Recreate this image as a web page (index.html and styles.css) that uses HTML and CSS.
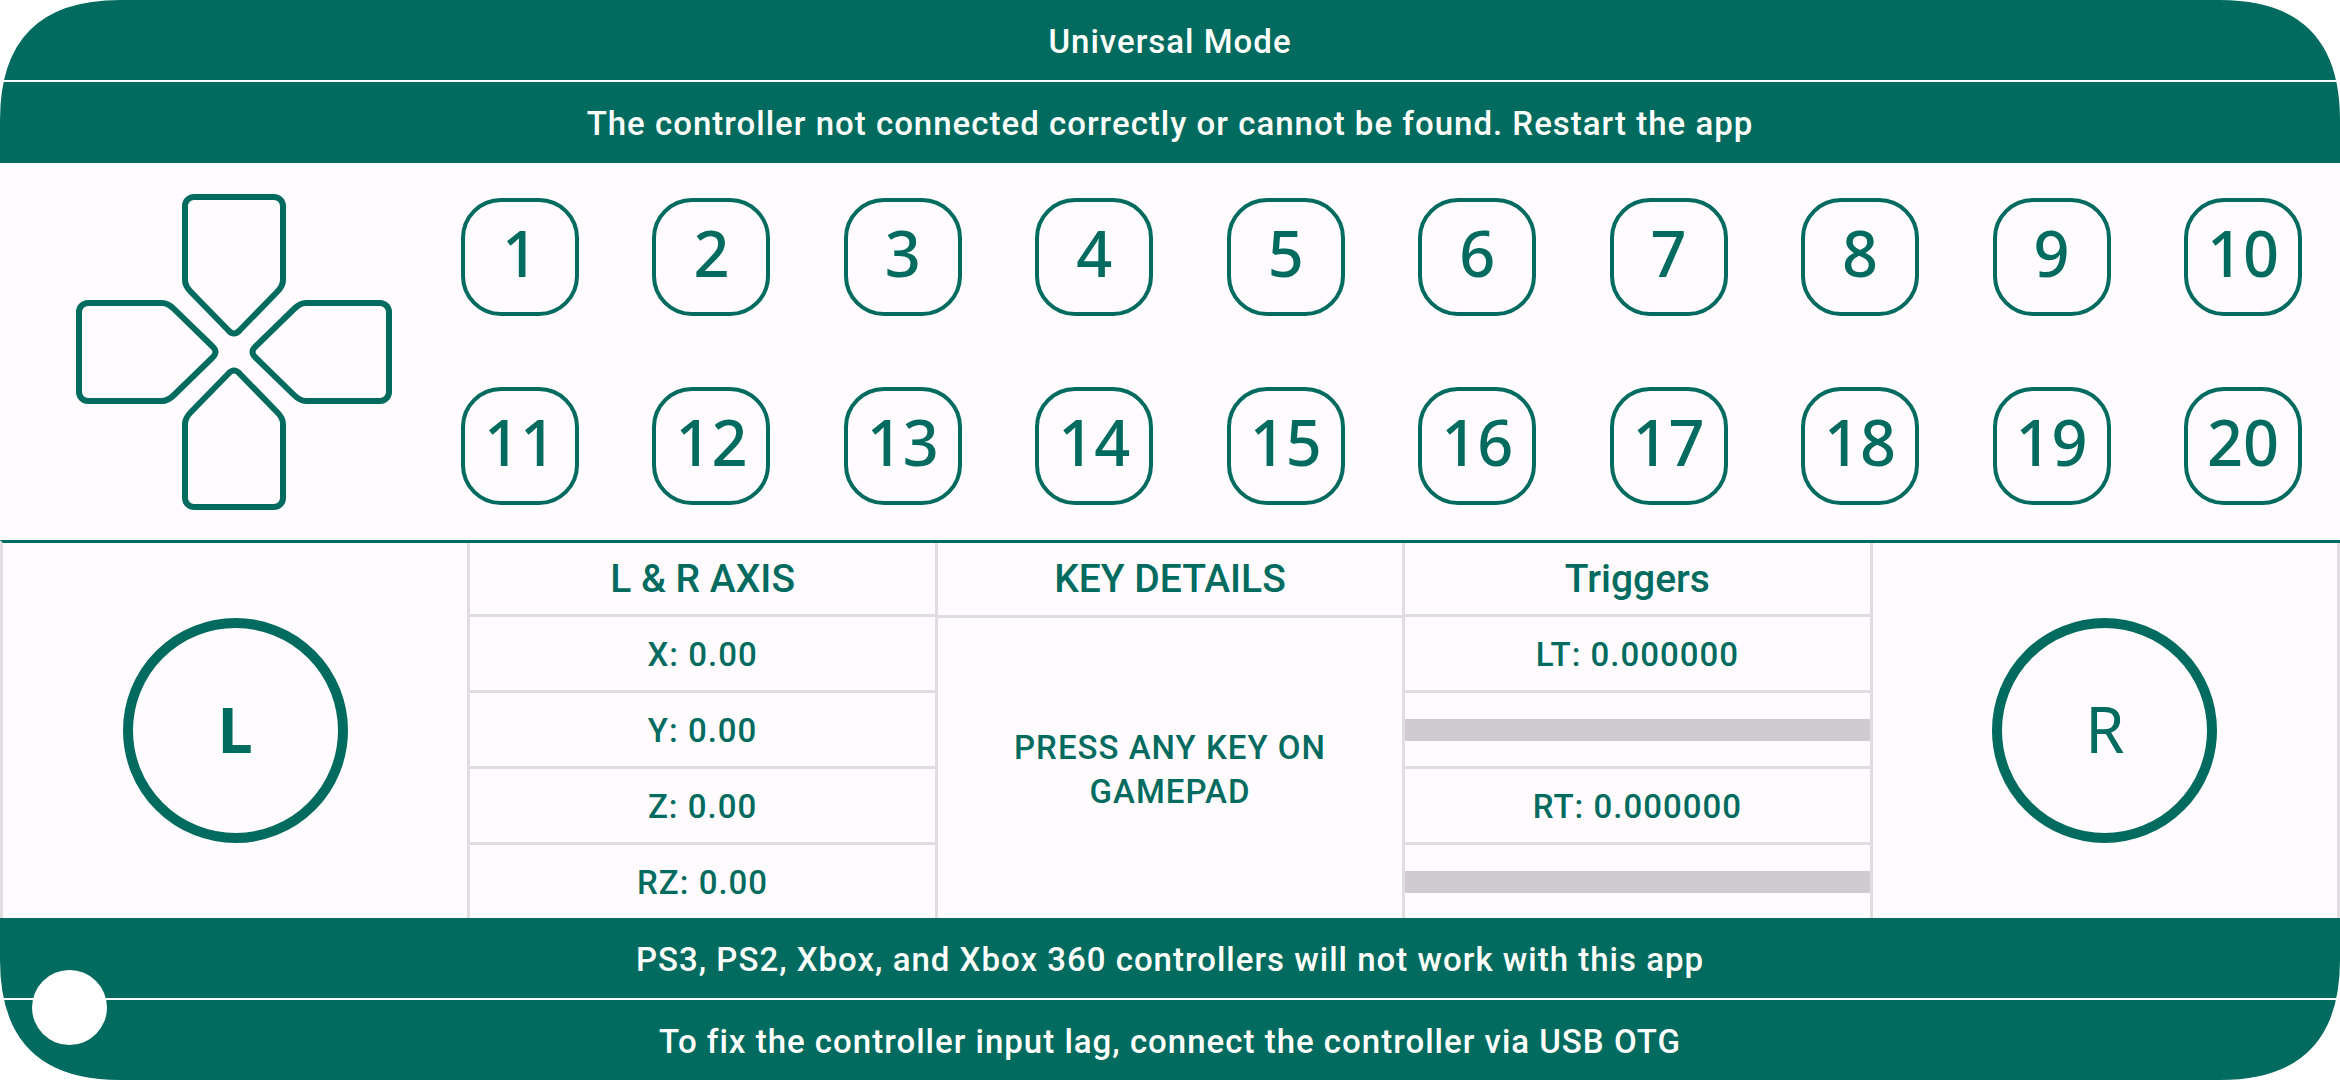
FILE: index.html
```html
<!DOCTYPE html>
<html lang="en">
<head>
    <meta charset="UTF-8">
    <meta name="viewport" content="width=device-width, initial-scale=1.0">
    <title>Gamepad Tester</title>

    <link rel="stylesheet" href="styles.css">
</head>

<body>
    <div class="container">
        <header class="bars">
            <p>Universal Mode</p>
            <p>The controller not connected correctly or cannot be found. Restart the app</p>
        </header>

        <section class="pad">
            <svg class="dpad" viewBox="0 0 316 316">
                <defs>
                    <path id="arrow" d="M109 86V12A9 9 0 0 1 118 3H198A9 9 0 0 1 207 12V86Q207 92 201 98L164 136Q158 143 152 136L115 98Q109 92 109 86Z"/>
                </defs>
                <use href="#arrow"/>
                <use href="#arrow" transform="rotate(90 158 158)"/>
                <use href="#arrow" transform="rotate(180 158 158)"/>
                <use href="#arrow" transform="rotate(270 158 158)"/>
            </svg>

            <div class="keys">
                <div class="keys_row">
                    <button>1</button>
                    <button>2</button>
                    <button>3</button>
                    <button>4</button>
                    <button>5</button>
                    <button>6</button>
                    <button>7</button>
                    <button>8</button>
                    <button>9</button>
                    <button>10</button>
                </div>
                <div class="keys_row">
                    <button>11</button>
                    <button>12</button>
                    <button>13</button>
                    <button>14</button>
                    <button>15</button>
                    <button>16</button>
                    <button>17</button>
                    <button>18</button>
                    <button>19</button>
                    <button>20</button>
                </div>
            </div>
        </section>

        <section class="details">
            <div class="column stick">
                <button class="left">L</button>
            </div>

            <div class="column">
                <table>
                    <tr><th>L &amp; R AXIS</th></tr>
                    <tr><td>X: 0.00</td></tr>
                    <tr><td>Y: 0.00</td></tr>
                    <tr><td>Z: 0.00</td></tr>
                    <tr><td>RZ: 0.00</td></tr>
                </table>
            </div>

            <div class="column key_details">
                <h2>KEY DETAILS</h2>
                <p>PRESS ANY KEY ON GAMEPAD</p>
            </div>

            <div class="column">
                <table>
                    <tr><th>Triggers</th></tr>
                    <tr><td><label for="lt">LT: 0.000000</label></td></tr>
                    <tr><td class="bar"><progress id="lt" value="0" max="1"></progress></td></tr>
                    <tr><td><label for="rt">RT: 0.000000</label></td></tr>
                    <tr><td class="bar"><progress id="rt" value="0" max="1"></progress></td></tr>
                </table>
            </div>

            <div class="column stick">
                <button>R</button>
            </div>
        </section>

        <footer class="bars">
            <p>PS3, PS2, Xbox, and Xbox 360 controllers will not work with this app</p>
            <p>To fix the controller input lag, connect the controller via USB OTG</p>
        </footer>

        <button class="menu" aria-label="Menu"></button>

        <!-- rounded screen corners -->
        <svg class="corner top_left" viewBox="0 0 120 120"><path d="M0 0H120Q0 0 0 120Z"/></svg>
        <svg class="corner top_right" viewBox="0 0 120 120"><path d="M120 0V120Q120 0 0 0Z"/></svg>
        <svg class="corner bottom_left" viewBox="0 0 120 120"><path d="M0 120V0Q0 120 120 120Z"/></svg>
        <svg class="corner bottom_right" viewBox="0 0 120 120"><path d="M120 120H0Q120 120 120 0Z"/></svg>
    </div>
</body>
</html>
```
FILE: styles.css
```css
*{
    margin: 0;
    padding: 0;
    box-sizing: border-box;
}
body{
    background-color: #fffbff;
    color: #006b5e;
    font-family: Roboto, sans-serif;
    font-size: 33px;
    font-weight: 500;
    letter-spacing: 1px;
}
button{
    background: none;
    color: #006b5e;
    font-family: "Noto Sans", "Open Sans", sans-serif;
    font-size: 63px;
    line-height: 80px;
}
.container{
    position: relative;
    min-height: 100vh;
    display: flex;
    flex-direction: column;
}

.bars{
    background-color: #006b5e;
    color: #ffffff;
    text-align: center;
}
.bars p{
    padding: 22px 20px 18px;
    line-height: 40px;
}
.bars p + p{
    border-top: 2px solid #ffffff;
}
header.bars{
    padding-bottom: 1px;
}

.pad{
    flex: 1;
    display: flex;
    align-items: center;
    gap: 69px;
    padding: 0 38px 0 76px;
}
.dpad{
    width: 316px;
    height: 316px;
    flex-shrink: 0;
    fill: none;
    stroke: #006b5e;
    stroke-width: 6px;
}
.keys{
    flex: 1;
    display: flex;
    flex-direction: column;
    gap: 71px;
}
.keys_row{
    display: flex;
    justify-content: space-between;
}
.keys_row button{
    width: 118px;
    height: 118px;
    padding-bottom: 8px;
    border: 4px solid #006b5e;
    border-radius: 40px;
    font-weight: 500;
}

.details{
    display: grid;
    grid-template-columns: repeat(5, 1fr);
    border-top: 3px solid #006b5e;
    border-left: 3px solid #e0dce0;
    text-align: center;
}
.column{
    border-right: 3px solid #e0dce0;
}
.stick{
    display: flex;
    align-items: center;
    justify-content: center;
}
.stick button{
    width: 225px;
    height: 225px;
    padding-bottom: 4px;
    border: 10px solid #006b5e;
    border-radius: 50%;
}
.stick .left{
    font-weight: 700;
}

table{
    width: 100%;
    border-spacing: 0;
}
th, td{
    height: 76px;
    border-bottom: 3px solid #e0dce0;
    vertical-align: middle;
}
td{
    padding-top: 2px;
}
.bar{
    padding-top: 0;
}
th, h2{
    height: 74px;
    font-size: 39px;
    font-weight: 500;
    letter-spacing: 0;
}
tr:last-child td{
    height: 73px;
    border-bottom: none;
}
progress{
    display: block;
    width: 100%;
    height: 22px;
    appearance: none;
    border: none;
    background-color: #d0cbd0;
}
progress::-webkit-progress-bar{
    background-color: #d0cbd0;
}
progress::-webkit-progress-value{
    background-color: #006b5e;
}

.key_details{
    display: flex;
    flex-direction: column;
}
.key_details h2{
    height: 75px;
    line-height: 72px;
    border-bottom: 3px solid #e0dce0;
}
.key_details p{
    flex: 1;
    display: flex;
    align-items: center;
    padding: 4px 70px 0;
    line-height: 44px;
}

.menu{
    position: absolute;
    left: 32px;
    bottom: 35px;
    width: 75px;
    height: 75px;
    border: none;
    border-radius: 50%;
    background-color: #ffffff;
}
.corner{
    position: absolute;
    width: 120px;
    height: 120px;
    fill: #ffffff;
    pointer-events: none;
}
.top_left{
    top: 0;
    left: 0;
}
.top_right{
    top: 0;
    right: 0;
}
.bottom_left{
    bottom: 0;
    left: 0;
}
.bottom_right{
    bottom: 0;
    right: 0;
}
```
